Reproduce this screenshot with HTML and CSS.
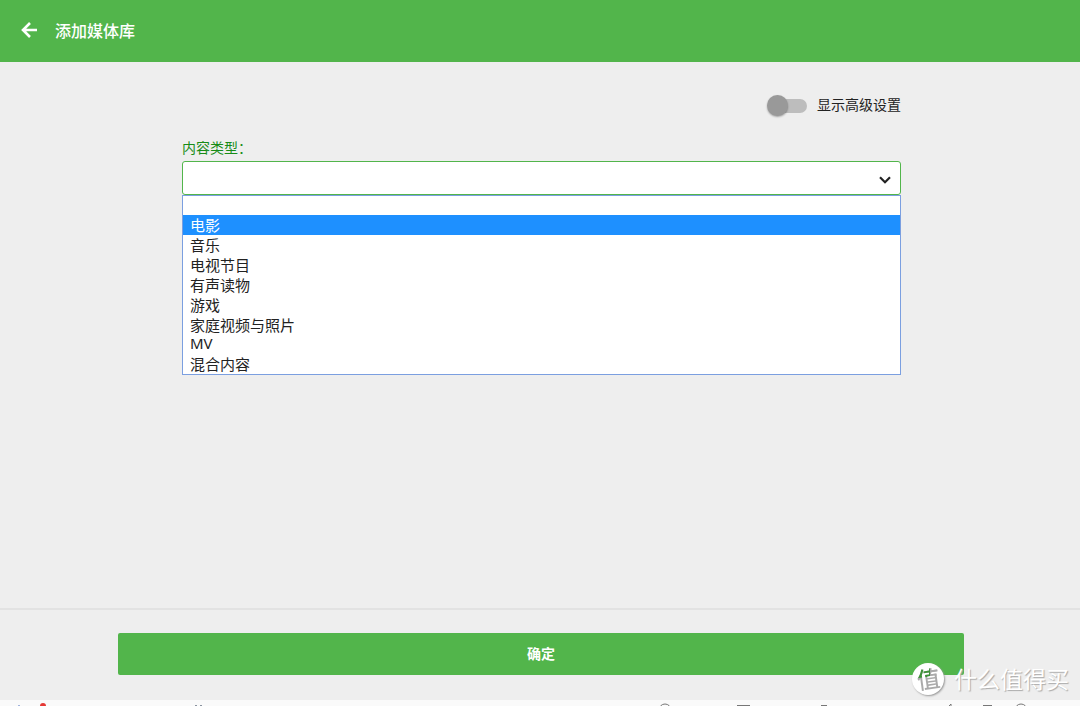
FILE: index.html
```html
<!DOCTYPE html>
<html lang="zh-CN">
<head>
<meta charset="utf-8">
<meta name="viewport" content="width=device-width, initial-scale=1">
<title>添加媒体库</title>
<link rel="stylesheet" href="styles.css">
</head>
<body>
<div class="app">
  <header class="header">
    <button class="back" type="button" aria-label="返回">
      <svg width="24" height="24" viewBox="0 0 24 24" aria-hidden="true"><path d="M20 12H6M13 5l-7 7 7 7" fill="none" stroke="currentColor" stroke-width="2.6"/></svg>
    </button>
    <h1 class="title">添加媒体库</h1>
  </header>
  <main class="content">
    <form class="form" id="library-form">
      <label class="toggle">
        <input class="switch" type="checkbox" role="switch">
        <span>显示高级设置</span>
      </label>
      <label class="field-label" for="content-type">内容类型<span class="colon">：</span></label>
      <div class="select-box">
        <select class="select" id="content-type">
          <option selected></option>
          <option>电影</option>
          <option>音乐</option>
          <option>电视节目</option>
          <option>有声读物</option>
          <option>游戏</option>
          <option>家庭视频与照片</option>
          <option>MV</option>
          <option>混合内容</option>
        </select>
        <svg class="chevron" width="12" height="8" viewBox="0 0 12 8" aria-hidden="true"><path d="M1 1.200l5 5 5-5" fill="none" stroke="currentColor" stroke-width="2.200"/></svg>
        <ul class="options" role="listbox" aria-label="内容类型">
          <li class="option blank" role="option"></li>
          <li class="option active" role="option" aria-selected="true">电影</li>
          <li class="option" role="option">音乐</li>
          <li class="option" role="option">电视节目</li>
          <li class="option" role="option">有声读物</li>
          <li class="option" role="option">游戏</li>
          <li class="option" role="option">家庭视频与照片</li>
          <li class="option latin" role="option">MV</li>
          <li class="option" role="option">混合内容</li>
        </ul>
      </div>
    </form>
  </main>
  <footer class="footer">
    <button class="submit" type="submit" form="library-form">确定</button>
  </footer>
  <div class="strip">
    <svg width="220" height="6" viewBox="0 0 220 6" aria-hidden="true">
      <path d="M18 6l1-1 1 1z" fill="#4a6fc0"/><circle cx="43" cy="6" r="3" fill="#e53935"/><path d="M195 5h2v1h-2zM200 5h2v1h-2z" fill="#8a93a0"/>
    </svg>
    <svg width="440" height="6" viewBox="0 0 440 6" fill="none" stroke="#777" aria-hidden="true">
      <circle cx="25" cy="10" r="6"/><path d="M97 5.500h13M181 5.500h6M309 6l2-2v2M343 5.500h9"/><circle cx="381" cy="10" r="6"/>
    </svg>
  </div>
  <div class="watermark">
    <span class="mark"><span class="mark-char">值</span></span>
    <span>什么值得买</span>
  </div>
</div>
</body>
</html>
```
FILE: styles.css
```css
* { box-sizing: border-box; }

body {
  margin: 0;
  background: #eee;
  color: #222;
  font-family: "Noto Sans", "Noto Sans CJK SC", sans-serif;
  font-size: 14px;
}

.app {
  position: relative;
  display: flex;
  flex-direction: column;
  min-height: 100vh;
  overflow: hidden;
}

.header {
  display: flex;
  align-items: center;
  gap: 14px;
  padding: 16px 17px;
  background: #52b54b;
  color: #fff;
}

.back {
  display: flex;
  padding: 2px 0 4px;
  border: 0;
  background: none;
  color: inherit;
}

.title {
  margin: 0;
  font-size: 16px;
  line-height: 30px;
  font-weight: 500;
}

.content { flex: 1; padding: 31px 179px 0 182px; }

.form { display: flex; flex-direction: column; }

.toggle {
  display: flex;
  align-items: center;
  align-self: flex-end;
  gap: 10px;
  line-height: 24px;
}

.switch {
  position: relative;
  appearance: none;
  width: 38px;
  height: 14px;
  margin: 2px 0 0;
  border-radius: 7px;
  background: #bdbdbd;
}

.switch::before {
  content: "";
  position: absolute;
  top: -4px;
  left: -2px;
  width: 21px;
  height: 21px;
  border-radius: 50%;
  background: #999;
  box-shadow: 0 1px 2px #0005;
}

.field-label {
  margin-top: 21px;
  color: #178c17;
  line-height: 20px;
}

.colon { font-family: "Noto Sans CJK TC", sans-serif; line-height: 1; }

.select-box { position: relative; margin-top: 3px; }

.select {
  display: block;
  appearance: none;
  width: 100%;
  height: 34px;
  padding: 0 32px 0 8px;
  border: 1px solid #52b54b;
  border-radius: 3px;
  outline: 0;
  background: #fff;
  font: inherit;
}

.chevron {
  position: absolute;
  top: 15px;
  right: 10px;
  color: #222;
  pointer-events: none;
}

.options {
  position: absolute;
  top: 100%;
  left: 0;
  right: 0;
  margin: 0;
  padding: 0;
  border: 1px solid #7b9fe0;
  background: #fff;
  list-style: none;
}

.option {
  height: 20px;
  padding: 0 7px;
  font-size: 15px;
  line-height: 20px;
}

.blank { height: 19px; }
.active { background: #1e90ff; color: #fff; }
.latin { height: 19px; line-height: 16px; }

.footer {
  padding: 23px 116px 25px 118px;
  border-top: 2px solid #e2e2e2;
}

.submit {
  display: block;
  width: 100%;
  height: 42px;
  padding: 0 0 2px;
  border: 0;
  border-radius: 2px;
  background: #52b54b;
  color: #fff;
  font: inherit;
  font-weight: 700;
}

.strip {
  display: flex;
  justify-content: space-between;
  height: 6px;
  background: #fafafa;
}

.watermark {
  position: absolute;
  right: 11px;
  bottom: 9px;
  display: flex;
  align-items: center;
  gap: 10px;
  color: #fff;
  font-size: 23px;
  line-height: 36px;
  text-shadow: 1px 1px 1px #aaa;
}

.mark {
  display: flex;
  align-items: center;
  justify-content: center;
  width: 32px;
  height: 32px;
  border-radius: 50%;
  background: #fff;
  box-shadow: 1px 1px 2px #999;
}

.mark-char {
  background: linear-gradient(100deg, #3d9137 60%, #aaa 60%) top / 100% 42% no-repeat, #aaa;
  background-clip: text;
  color: transparent;
  font-size: 23px;
  font-weight: 500;
  line-height: 28px;
  text-shadow: none;
  transform: rotate(-8deg);
}
```
